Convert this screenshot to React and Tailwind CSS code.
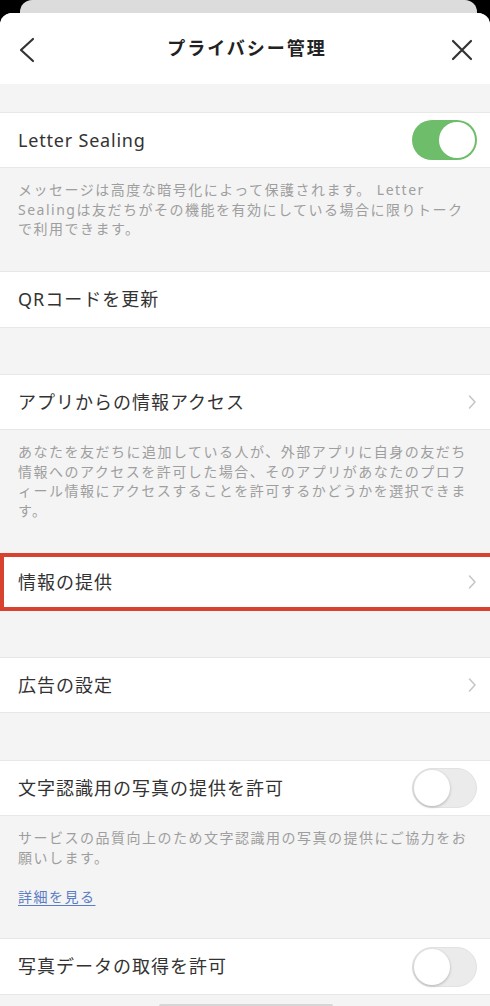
import React from "react";

const jp = { fontFamily: '"Noto Sans", "Noto Sans CJK JP", sans-serif' };

const Chevron = () => (
  <svg width="10" height="16" viewBox="0 0 10 16" className="shrink-0">
    <polyline points="2.5,2 8,8 2.5,14" fill="none" stroke="#c6c6c6" strokeWidth="1.6" strokeLinecap="round" strokeLinejoin="round" />
  </svg>
);

const Toggle = ({ on }) =>
  on ? (
    <div className="w-[65px] h-[40px] rounded-full bg-[#6dbd6b] flex items-center justify-end pr-[2px] shrink-0">
      <div className="w-[36px] h-[36px] rounded-full bg-white" />
    </div>
  ) : (
    <div className="w-[65px] h-[40px] rounded-full bg-[#ebebeb] border border-[#e2e2e2] flex items-center justify-start pl-[1px] shrink-0">
      <div className="w-[36px] h-[36px] rounded-full bg-white shadow-[0_1px_3px_rgba(0,0,0,0.25)]" />
    </div>
  );

const Row = ({ children, right, h = "h-[56px]" }) => (
  <div className={`${h} bg-white border-y border-[#e7e7e7] flex items-center justify-between pl-[18px] pr-[13px]`}>
    <div className="text-[18px] text-[#333] tracking-[1px]">{children}</div>
    {right}
  </div>
);

const Desc = ({ lines, children, className = "" }) => (
  <div className={`pl-[18px] pr-[18px] pt-[12px] text-[14px] leading-[19.5px] text-[#9e9e9e] tracking-[1.5px] ${className}`}>
    {lines.map((l, i) => (
      <div key={i} className="whitespace-nowrap">{l}</div>
    ))}
    {children}
  </div>
);

export default function App() {
  return (
    <div className="w-full h-[1006px] bg-black overflow-hidden flex flex-col" style={jp}>
      {/* card behind */}
      <div className="ml-[20px] mr-[13px] h-[24px] bg-[#dcdcdc] rounded-t-[12px] shrink-0" />

      {/* sheet */}
      <div className="-mt-[11px] relative flex-1 rounded-t-[12px] bg-[#f4f4f4] overflow-hidden flex flex-col">
        {/* header */}
        <div className="h-[71px] bg-white grid grid-cols-[70px_1fr_70px] items-center shrink-0">
          <div className="pl-[18px] pt-[2px]">
            <svg width="18" height="26" viewBox="0 0 18 26">
              <polyline points="15,2 3,13 15,24" fill="none" stroke="#333" strokeWidth="2.2" strokeLinecap="round" strokeLinejoin="round" />
            </svg>
          </div>
          <div className="text-center text-[18px] font-bold text-[#222] tracking-[2px] pl-[4px]">プライバシー管理</div>
          <div className="flex justify-end pr-[17px] pt-[2px]">
            <svg width="22" height="22" viewBox="0 0 22 22">
              <path d="M2 2 L20 20 M20 2 L2 20" fill="none" stroke="#333" strokeWidth="2.2" strokeLinecap="round" />
            </svg>
          </div>
        </div>

        <div className="h-[28px] shrink-0" />

        <Row right={<Toggle on />}>
          <span className="tracking-[0.8px]">Letter Sealing</span>
        </Row>
        <Desc
          className="h-[103px]"
          lines={[
            "メッセージは高度な暗号化によって保護されます。 Letter",
            "Sealingは友だちがその機能を有効にしている場合に限りトーク",
            "で利用できます。",
          ]}
        />

        <Row h="h-[57px]">QRコードを更新</Row>
        <div className="h-[46px] shrink-0" />

        <Row right={<Chevron />}>アプリからの情報アクセス</Row>
        <Desc
          className="h-[123px]"
          lines={[
            "あなたを友だちに追加している人が、外部アプリに自身の友だち",
            "情報へのアクセスを許可した場合、そのアプリがあなたのプロフ",
            "ィール情報にアクセスすることを許可するかどうかを選択できま",
            "す。",
          ]}
        />

        <div className="h-[58px] bg-white border-y-4 border-l-4 border-[#d8432f] flex items-center justify-between pl-[14px] pr-[13px] shrink-0">
          <div className="text-[18px] text-[#333] tracking-[1px]">情報の提供</div>
          <Chevron />
        </div>
        <div className="h-[46px] shrink-0" />

        <Row right={<Chevron />}>広告の設定</Row>
        <div className="h-[47px] shrink-0" />

        <Row right={<Toggle on={false} />}>文字認識用の写真の提供を許可</Row>
        <Desc
          className="h-[122px]"
          lines={[
            "サービスの品質向上のため文字認識用の写真の提供にご協力をお",
            "願いします。",
          ]}
        >
          <div className="mt-[19.5px] text-[#5b7cc6] underline underline-offset-[3px]">詳細を見る</div>
        </Desc>

        <Row h="h-[57px]" right={<Toggle on={false} />}>写真データの取得を許可</Row>

        <div className="flex-1 flex justify-center items-end">
          <div className="w-[174px] h-[2px] bg-[#d6d6d6] rounded-t-[2px] ml-[2px]" />
        </div>
      </div>
    </div>
  );
}
